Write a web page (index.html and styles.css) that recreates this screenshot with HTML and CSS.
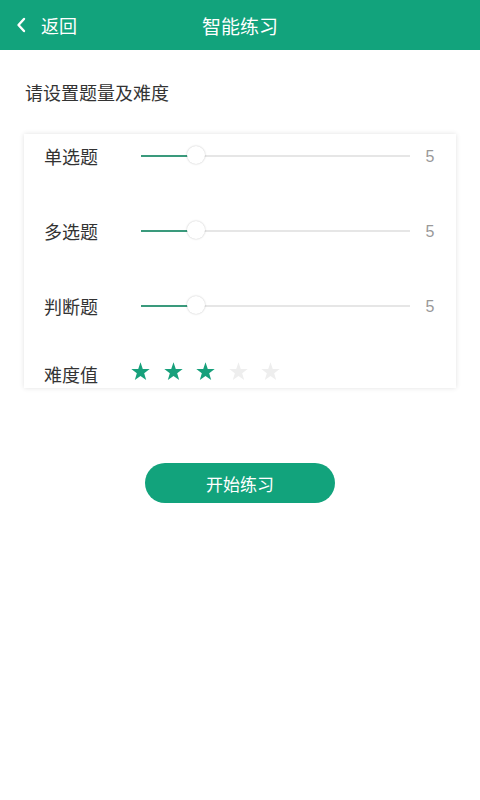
FILE: index.html
```html
<!DOCTYPE html>
<html>
<head>
    <meta charset="utf-8" />
    <title>智能练习</title>
    <link rel="stylesheet" href="styles.css">
</head>
<body>
    <div class="header">
        <div class="back">
            <svg class="chevron" width="10" height="16" viewBox="0 0 10 16"><path d="M8 2 L2.5 8 L8 14" fill="none" stroke="#fff" stroke-width="2.4" stroke-linecap="round" stroke-linejoin="round"/></svg>
            <span>返回</span>
        </div>
        <div class="title">智能练习</div>
        <div></div>
    </div>

    <div class="intro">请设置题量及难度</div>

    <div class="card">
        <div class="row">
            <div class="label">单选题</div>
            <div class="slider"><div class="fill"></div><div class="thumb"></div></div>
            <div class="value">5</div>
        </div>
        <div class="row">
            <div class="label">多选题</div>
            <div class="slider"><div class="fill"></div><div class="thumb"></div></div>
            <div class="value">5</div>
        </div>
        <div class="row">
            <div class="label">判断题</div>
            <div class="slider"><div class="fill"></div><div class="thumb"></div></div>
            <div class="value">5</div>
        </div>
        <div class="row level">
            <div class="label">难度值</div>
            <div class="stars">
                <svg class="star on" viewBox="0 0 24 24"><path d="M12 1.5 L14.6 9 L22.5 9.2 L16.2 14 L18.5 21.8 L12 17.2 L5.5 21.8 L7.8 14 L1.5 9.2 L9.4 9 Z"/></svg>
                <svg class="star on" viewBox="0 0 24 24"><path d="M12 1.5 L14.6 9 L22.5 9.2 L16.2 14 L18.5 21.8 L12 17.2 L5.5 21.8 L7.8 14 L1.5 9.2 L9.4 9 Z"/></svg>
                <svg class="star on" viewBox="0 0 24 24"><path d="M12 1.5 L14.6 9 L22.5 9.2 L16.2 14 L18.5 21.8 L12 17.2 L5.5 21.8 L7.8 14 L1.5 9.2 L9.4 9 Z"/></svg>
                <svg class="star" viewBox="0 0 24 24"><path d="M12 1.5 L14.6 9 L22.5 9.2 L16.2 14 L18.5 21.8 L12 17.2 L5.5 21.8 L7.8 14 L1.5 9.2 L9.4 9 Z"/></svg>
                <svg class="star" viewBox="0 0 24 24"><path d="M12 1.5 L14.6 9 L22.5 9.2 L16.2 14 L18.5 21.8 L12 17.2 L5.5 21.8 L7.8 14 L1.5 9.2 L9.4 9 Z"/></svg>
            </div>
        </div>
    </div>

    <div class="actions">
        <div class="start">开始练习</div>
    </div>
</body>
</html>
```

FILE: styles.css
```css
body { margin: 0; background-color: #fff; font-family: "Noto Sans CJK SC", "Noto Sans", sans-serif; color: #333; }
.header { height: 50px; background-color: #12a37c; color: #fff; display: grid; grid-template-columns: 1fr auto 1fr; align-items: center; }
.back { display: flex; align-items: center; padding-left: 16px; font-size: 18px; }
.back .chevron { margin-right: 15px; }
.title { font-size: 19px; }
.intro { font-size: 18px; line-height: 24px; padding: 30px 0 0 25px; color: #333; }
.card { margin: 30px 24px 0 24px; background-color: #fff; box-shadow: 0 0 5px rgba(0, 0, 0, 0.12); display: flex; flex-direction: column; gap: 29px; }
.row { height: 46px; display: flex; align-items: center; padding: 0 6px 0 20px; }
.label { width: 97px; font-size: 18px; line-height: 24px; color: #333; margin-bottom: 2px; }
.slider { flex: 1; height: 2px; background-color: #e6e6e6; position: relative; margin-bottom: 2px; }
.slider .fill { width: 47px; height: 2px; background-color: #3a9a7c; }
.slider .thumb { position: absolute; left: 46px; top: -9px; width: 18px; height: 18px; border-radius: 50%; background-color: #fff; box-shadow: 0 0 2px rgba(0, 0, 0, 0.25); }
.value { width: 40px; text-align: center; font-family: "Liberation Sans", sans-serif; font-size: 16px; color: #999; }
.row.level { height: 29px; }
.row.level .label { width: 86px; margin-bottom: 0; }
.stars { display: flex; gap: 11.5px; margin-bottom: 4px; }
.star { width: 21px; height: 21px; fill: #eeeeee; }
.star.on { fill: #17a07b; }
.actions { display: flex; justify-content: center; padding-top: 75px; }
.start { width: 190px; height: 40px; border-radius: 20px; background-color: #12a37c; color: #fff; font-size: 17px; display: flex; align-items: center; justify-content: center; }
```
